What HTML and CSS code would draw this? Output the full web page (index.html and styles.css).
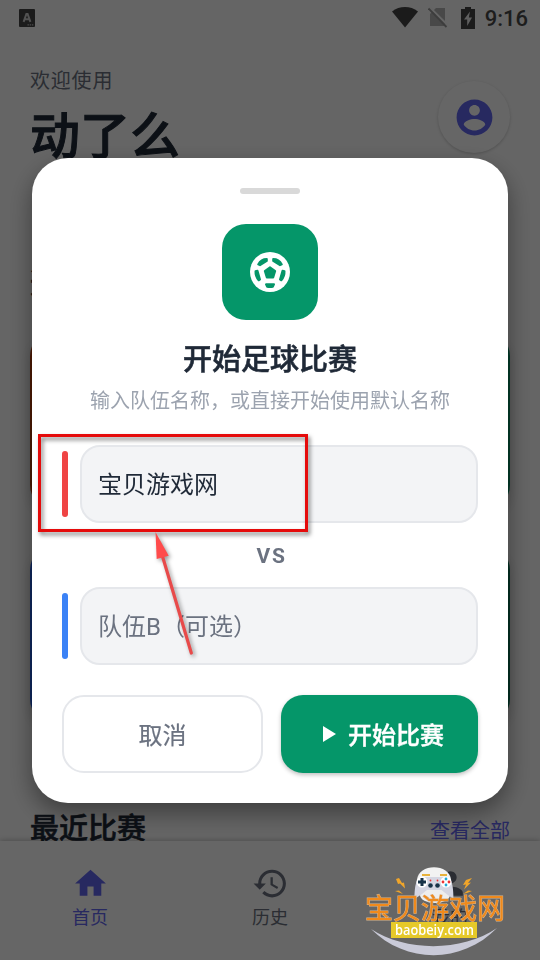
FILE: index.html
```html
<!DOCTYPE html>
<html lang="zh-CN">
<head>
  <meta charset="UTF-8" />
  <meta name="viewport" content="width=device-width, initial-scale=1.0" />
  <title>动了么</title>
  <link rel="stylesheet" href="styles.css">
</head>
<body>
  <div class="app">
    <div class="status-bar">
      <svg class="status-app" width="16" height="18" viewBox="0 0 16 18">
        <rect width="16" height="18" rx="1" fill="#444"/>
        <path d="M4.600 12.800 7.400 5h1.200l2.800 7.800M6 10.300h4" fill="none" stroke="#ccc" stroke-width="2"/>
        <path d="M8.500 15.900h6" stroke="#bbb" stroke-width="1.400" stroke-dasharray="1.400 .8"/>
      </svg>
      <div class="status-icons">
        <svg width="26" height="21" viewBox="0 0 26 21"><path d="M0 4.500C7.500-1.400 18.500-1.400 26 4.500L13 20.500z" fill="#444"/></svg>
        <svg class="no-sim" width="20" height="21" viewBox="0 0 20 21">
          <path d="M8 1h9v18H2V7z" fill="#b4b4b4"/>
          <path d="M1.500 0 20 18.500" stroke="#fafafa" stroke-width="2"/>
          <path d="M.5 1.500 18.500 20" stroke="#999" stroke-width="1.800"/>
        </svg>
        <svg width="14" height="22" viewBox="0 0 14 22"><path d="M4 0h6v2h4v20H0V2h4z" fill="#444"/><path d="M9 4.500 3 12.400h3.200V19L11 10.400H7.800z" fill="#eee"/></svg>
        <span class="clock">9:16</span>
      </div>
    </div>

    <header class="header">
      <div>
        <p class="welcome">欢迎使用</p>
        <h1 class="app-name">动了么</h1>
      </div>
      <div class="avatar">
        <svg width="43" height="43" viewBox="0 0 24 24"><path fill="#6366f1" d="M12 2C6.480 2 2 6.480 2 12s4.480 10 10 10 10-4.480 10-10S17.520 2 12 2zm0 3c1.660 0 3 1.340 3 3s-1.340 3-3 3-3-1.340-3-3 1.340-3 3-3zm0 14.200c-2.500 0-4.710-1.280-6-3.220.03-1.990 4-3.080 6-3.080 1.990 0 5.970 1.090 6 3.080-1.290 1.940-3.500 3.220-6 3.220z"/></svg>
      </div>
    </header>

    <main class="content">
      <h2 class="section-title">选择运动</h2>
      <div class="sports">
        <div class="sport orange"></div>
        <div class="sport green"></div>
        <div class="sport blue"></div>
        <div class="sport dark-green"></div>
      </div>
      <div class="recent">
        <h2 class="section-title">最近比赛</h2>
        <a class="more">查看全部</a>
      </div>
    </main>

    <nav class="tabs">
      <div class="tab active">
        <svg width="37" height="37" viewBox="0 0 24 24"><path fill="currentColor" d="M10 20v-6h4v6h5v-8h3L12 3 2 12h3v8z"/></svg>
        <span>首页</span>
      </div>
      <div class="tab">
        <svg width="37" height="37" viewBox="0 0 24 24"><path fill="currentColor" d="M13 3c-4.970 0-9 4.030-9 9H1l3.890 3.890.07.14L9 12H6c0-3.870 3.130-7 7-7s7 3.130 7 7-3.130 7-7 7c-1.930 0-3.680-.79-4.940-2.060l-1.420 1.420C8.270 19.990 10.510 21 13 21c4.970 0 9-4.030 9-9s-4.030-9-9-9zm-1 5v5l4.280 2.540.72-1.210-3.500-2.080V8H12z"/></svg>
        <span>历史</span>
      </div>
      <div class="tab">
        <svg width="37" height="37" viewBox="0 0 24 24"><path fill="currentColor" d="M12 12c2.210 0 4-1.790 4-4s-1.790-4-4-4-4 1.790-4 4 1.790 4 4 4zm0 2c-2.670 0-8 1.340-8 4v2h16v-2c0-2.660-5.330-4-8-4z"/></svg>
        <span>我的</span>
      </div>
    </nav>
  </div>

  <div class="overlay">
    <div class="modal">
      <div class="handle"></div>
      <div class="ball">
        <svg width="48" height="48" viewBox="0 0 48 48">
          <circle cx="24" cy="24" r="20" fill="#fff"/>
          <g fill="#059669" stroke="#059669" stroke-width="2" stroke-linejoin="round">
            <path d="M24 19.300 29.200 23l-2 6.400h-6.400l-2-6.400z"/>
            <path d="M20 36.300h8l-1.200 2.500c-1.800.4-3.800.4-5.600 0z"/>
            <path d="M20.800 11v2L14 17.200l-1.800-.8c1.600-3 4.600-5.400 8.600-5.400z"/>
            <path d="M27.200 11v2l6.800 4.200 1.800-.8c-1.600-3-4.600-5.400-8.600-5.400z"/>
            <path d="m9.500 23.300 2-.6 2.500 8.800-1.300.8c-2.200-2.500-3.400-5.500-3.200-9z"/>
            <path d="m38.500 23.300-2-.6-2.500 8.800 1.300.8c2.200-2.500 3.400-5.500 3.200-9z"/>
          </g>
        </svg>
      </div>
      <h2 class="modal-title">开始足球比赛</h2>
      <p class="modal-sub">输入队伍名称，或直接开始使用默认名称</p>
      <div class="team">
        <span class="bar red"></span>
        <div class="field filled">宝贝游戏网</div>
      </div>
      <div class="vs">VS</div>
      <div class="team">
        <span class="bar team-b"></span>
        <div class="field">队伍B（可选）</div>
      </div>
      <div class="actions">
        <button class="btn cancel">取消</button>
        <button class="btn start">
          <svg width="13" height="16" viewBox="0 0 13 16"><path d="M0 0v16l13-8z" fill="#fff"/></svg>
          开始比赛
        </button>
      </div>
    </div>
  </div>

  <!-- tutorial marks -->
  <div class="highlight"></div>
  <svg class="arrow" width="60" height="140" viewBox="0 0 60 140">
    <path d="M12.700 27 41.300 123" stroke="#e84a4a" stroke-width="3.200" stroke-linecap="round"/>
    <path d="M5.500 2 18.700 25.700 6.700 29z" fill="#ff4b4b"/>
  </svg>

  <svg class="watermark" width="150" height="100" viewBox="0 0 150 100">
    <path d="M11 69C46 104 102 104 137 68 102 92 46 92 11 69z" fill="#c9cad8"/>
    <path d="M57 20c1-17 33-17 34 0z" fill="#f2f2f2"/>
    <ellipse cx="75" cy="35" rx="15" ry="8" fill="#eee"/>
    <path d="M54.500 39c0-9 1-22 7-22h25c6 0 7 13 7 22l-7-5-5-4H67l-5 4z" fill="#d5d6e2"/>
    <path d="M62 15h8M80 15h7" stroke="#e8b23c" stroke-width="1.800"/>
    <circle cx="62" cy="22" r="5.500" fill="#fff"/>
    <circle cx="86" cy="22" r="5.500" fill="#fff"/>
    <path d="M62 18v8M58 22h8" stroke="#173247" stroke-width="3"/>
    <circle cx="86" cy="19" r="1.400" fill="#21a9d6"/><circle cx="86" cy="25" r="1.400" fill="#21a9d6"/>
    <circle cx="83" cy="22" r="1.400" fill="#e33"/><circle cx="89" cy="22" r="1.400" fill="#e33"/>
    <circle cx="70.500" cy="20.500" r=".9" fill="#e33"/><circle cx="77.500" cy="20.500" r=".9" fill="#e33"/>
    <circle cx="70.500" cy="25.500" r="2.300" fill="#173247"/><circle cx="77.500" cy="25.500" r="2.300" fill="#173247"/>
    <path d="m36 19 3-1 3 5 2-.5 1 6-5-5-2 .5zM35 31l4-.5 4 3.500-4-1.500zM112 18l-6 2-3 5 3-.5-2 5 7-7-3 .5zM112 31l-4-.5-5 3.500 4-1z" fill="#f0a52a"/>
    <text class="wm-name" x="5" y="58.500" textLength="140">宝贝游戏网</text>
    <rect x="31" y="62" width="86" height="16" fill="#e6c929"/>
    <text class="wm-url" x="35" y="75" textLength="79" lengthAdjust="spacingAndGlyphs">baobeiy.com</text>
  </svg>
</body>
</html>
```
FILE: styles.css
```css
* {
  box-sizing: border-box;
}

body {
  margin: 0;
  font-family: Roboto, 'Noto Sans CJK SC', sans-serif;
  background-color: #fcfcfc;
  overflow: hidden;
}

h1, h2, p {
  margin: 0;
}

.app {
  display: flex;
  flex-direction: column;
  height: 960px;
}

.status-bar {
  display: flex;
  justify-content: space-between;
  height: 36px;
  padding: 7px 12px 0 19px;
}

.status-app {
  margin-top: 2px;
}

.status-icons {
  display: flex;
  gap: 10px;
}

.no-sim {
  margin-right: 3px;
}

.clock {
  font-size: 22px;
  font-weight: 500;
  line-height: 24px;
  color: #4a4a4a;
}

.header {
  display: flex;
  justify-content: space-between;
  padding: 29px 30px 0;
  height: 130px;
}

.welcome {
  font-size: 20px;
  line-height: 33px;
  letter-spacing: 0.8px;
  color: #6b7280;
}

.app-name {
  font-size: 50px;
  line-height: 78px;
  font-weight: 500;
  color: #1f2937;
  -webkit-text-stroke: 1px #1f2937;
}

.avatar {
  width: 72px;
  height: 72px;
  margin-top: 16px;
  border-radius: 50%;
  background-color: #fff;
  box-shadow: 0 1px 3px rgba(0,0,0,0.2);
  display: flex;
  align-items: center;
  justify-content: center;
}

.content {
  height: 675px;
  padding: 98px 30px 0;
  overflow: hidden;
}

.section-title {
  font-size: 29px;
  line-height: 40px;
  font-weight: 500;
  color: #1f2937;
  -webkit-text-stroke: 0.6px #1f2937;
}

.sports {
  display: grid;
  grid-template-columns: 1fr 1fr;
  gap: 37px 24px;
  margin-top: 28px;
}

.sport {
  height: 177px;
  border-radius: 24px;
  box-shadow: 0 6px 12px rgba(0,0,0,0.15);
}

.orange { background-color: #c2410c; }
.green { background-color: #059669; }
.blue { background-color: #2563eb; }
.dark-green { background-color: #047857; }

.recent {
  display: flex;
  justify-content: space-between;
  align-items: center;
  margin-top: 86px;
}

.more {
  font-size: 20px;
  color: #6366f1;
}

.tabs {
  display: flex;
  height: 119px;
  background-color: #fff;
  box-shadow: 0 -1px 5px rgba(0,0,0,0.22);
}

.tab {
  flex: 1;
  display: flex;
  flex-direction: column;
  align-items: center;
  padding-top: 24px;
  font-size: 18px;
  line-height: 26px;
  gap: 3px;
  color: #6b7280;
}

.tab.active {
  color: #6366f1;
}

.overlay {
  position: fixed;
  inset: 0;
  display: flex;
  justify-content: center;
  align-items: flex-start;
  padding-top: 158px;
  background-color: rgba(0,0,0,0.6);
}

.modal {
  width: 476px;
  height: 645px;
  padding: 30px;
  border-radius: 36px;
  background-color: #fff;
  box-shadow: 0 10px 24px rgba(0,0,0,0.4);
  display: flex;
  flex-direction: column;
  align-items: center;
}

.handle {
  width: 60px;
  height: 6px;
  border-radius: 3px;
  background-color: #d9d9d9;
}

.ball {
  width: 96px;
  height: 96px;
  margin-top: 30px;
  border-radius: 24px;
  background-color: #059669;
  display: flex;
  align-items: center;
  justify-content: center;
}

.modal-title {
  margin-top: 19px;
  font-size: 29px;
  line-height: 42px;
  font-weight: 500;
  color: #1f2937;
  -webkit-text-stroke: 0.6px #1f2937;
}

.modal-sub {
  margin-top: 5px;
  font-size: 20px;
  line-height: 30px;
  color: #9ca3af;
}

.team {
  display: flex;
  align-items: center;
  gap: 12px;
  width: 100%;
}

.modal-sub + .team {
  margin-top: 29px;
}

.bar {
  width: 6px;
  height: 66px;
  border-radius: 3px;
}

.red { background-color: #ef4444; }
.team-b { background-color: #3b82f6; }

.field {
  flex: 1;
  height: 78px;
  padding: 0 16px;
  border: 2px solid #e5e7eb;
  border-radius: 20px;
  background-color: #f3f4f6;
  font-size: 24px;
  line-height: 76px;
  color: #6b7280;
}

.field.filled {
  color: #1f2937;
}

.vs {
  height: 64px;
  padding-left: 3px;
  line-height: 66px;
  font-size: 21px;
  font-weight: 700;
  letter-spacing: 1.6px;
  color: #6b7280;
}

.actions {
  display: flex;
  gap: 18px;
  width: 100%;
  margin-top: 30px;
}

.btn {
  height: 78px;
  border: none;
  border-radius: 22px;
  font-family: inherit;
  font-size: 24px;
}

.cancel {
  width: 201px;
  padding: 0 0 2px;
  border: 2px solid #e5e7eb;
  background-color: #fff;
  color: #6b7280;
  -webkit-text-stroke: 0.2px #6b7280;
}

.start {
  flex: 1;
  display: flex;
  align-items: center;
  justify-content: center;
  gap: 12px;
  padding: 0 0 1px 8px;
  background-color: #059669;
  color: #fff;
  font-weight: 500;
  -webkit-text-stroke: 0.4px #fff;
  box-shadow: 0 2px 4px rgba(0,0,0,0.25);
}

.highlight {
  position: absolute;
  left: 38px;
  top: 434px;
  width: 270px;
  height: 98px;
  border: 3px solid #e50b0b;
  filter: drop-shadow(2px 3px 2px rgba(0,0,0,0.5));
}

.arrow {
  position: absolute;
  left: 150px;
  top: 530px;
  filter: drop-shadow(2px 2px 2px rgba(0,0,0,0.4));
}

.watermark {
  position: absolute;
  left: 360px;
  top: 860px;
}

.wm-name {
  font: 400 28px 'Noto Sans CJK SC', sans-serif;
  fill: #f08a1c;
  stroke: #d8b48c;
  stroke-width: 1px;
  paint-order: stroke;
}

.wm-url {
  font: 600 15px 'Open Sans', sans-serif;
  fill: #fff;
}
```
